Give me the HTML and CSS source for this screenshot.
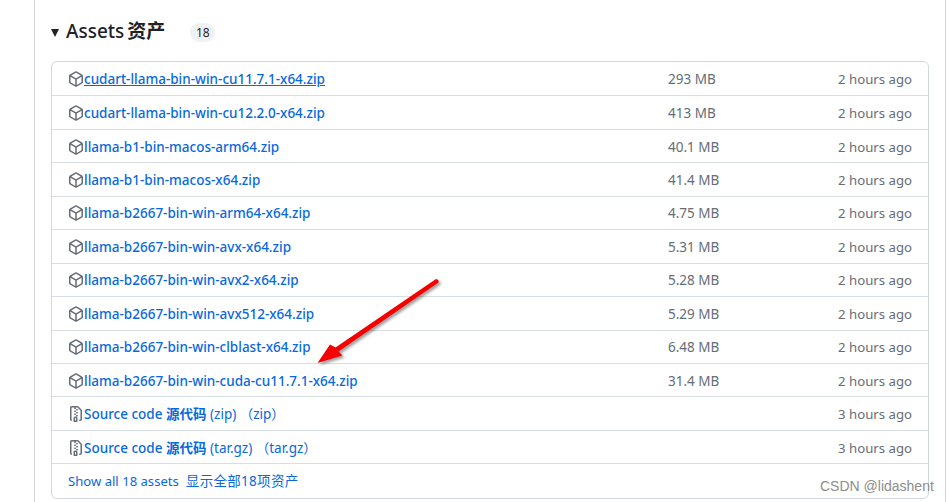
FILE: index.html

```html
<!DOCTYPE html>
<html lang="zh">
<head>
<meta charset="UTF-8">
<title>Assets</title>
<link rel="stylesheet" href="styles.css">
</head>
<body>

<svg class="defs" width="0" height="0">
    <symbol id="pkg" viewBox="0 0 16 16"><path d="m8.878.392 5.25 3.045c.54.314.872.89.872 1.514v6.098a1.75 1.75 0 0 1-.872 1.514l-5.25 3.045a1.75 1.75 0 0 1-1.756 0l-5.25-3.045A1.75 1.75 0 0 1 1 11.049V4.951c0-.624.332-1.201.872-1.514L7.122.392a1.75 1.75 0 0 1 1.756 0ZM7.875 1.69l-4.63 2.685L8 7.133l4.755-2.758-4.63-2.685a.248.248 0 0 0-.25 0ZM2.5 5.677v5.372c0 .09.047.171.125.216l4.625 2.683V8.432Zm6.25 8.271 4.625-2.683a.25.25 0 0 0 .125-.216V5.677L8.75 8.432Z"/></symbol>
    <symbol id="zip" viewBox="0 0 16 16"><path d="M3.5 1.75v11.5c0 .09.048.173.126.217a.75.75 0 0 1-.752 1.298A1.748 1.748 0 0 1 2 13.25V1.75C2 .784 2.784 0 3.75 0h5.586c.464 0 .909.185 1.237.513l2.914 2.914c.329.328.513.773.513 1.237v8.586A1.75 1.75 0 0 1 12.25 15h-.5a.75.75 0 0 1 0-1.5h.5a.25.25 0 0 0 .25-.25V4.664a.25.25 0 0 0-.073-.177L9.513 1.573a.25.25 0 0 0-.177-.073H7.25a.75.75 0 0 1 0 1.5h-.5a.75.75 0 0 1 0-1.5h-3a.25.25 0 0 0-.25.25Zm3.75 8.75h.5c.966 0 1.75.784 1.75 1.75v3a.75.75 0 0 1-.75.75h-2.5a.75.75 0 0 1-.75-.75v-3c0-.966.784-1.75 1.75-1.75ZM6 5.25a.75.75 0 0 1 .75-.75h.5a.75.75 0 0 1 0 1.5h-.5A.75.75 0 0 1 6 5.25Zm.75 2.25h.5a.75.75 0 0 1 0 1.5h-.5a.75.75 0 0 1 0-1.5ZM8 6.75A.75.75 0 0 1 8.75 6h.5a.75.75 0 0 1 0 1.5h-.5A.75.75 0 0 1 8 6.75ZM8.75 3h.5a.75.75 0 0 1 0 1.5h-.5a.75.75 0 0 1 0-1.5ZM8 9.75A.75.75 0 0 1 8.75 9h.5a.75.75 0 0 1 0 1.5h-.5A.75.75 0 0 1 8 9.75Zm-1 2.5v2.25h1v-2.25a.25.25 0 0 0-.25-.25h-.5a.25.25 0 0 0-.25.25Z"/></symbol>
</svg>

<div class="frame">
    <div class="head">
        <span class="caret"></span>
        <h2>Assets <b>资产</b></h2>
        <span class="count">18</span>
    </div>

    <ul class="assets">
        <li class="row"><span class="name"><svg class="ico"><use href="#pkg"/></svg><a class="hovered">cudart-llama-bin-win-cu11.7.1-x64.zip</a></span><span class="size">293 MB</span><span class="time">2 hours ago</span></li>
        <li class="row"><span class="name"><svg class="ico"><use href="#pkg"/></svg><a>cudart-llama-bin-win-cu12.2.0-x64.zip</a></span><span class="size">413 MB</span><span class="time">2 hours ago</span></li>
        <li class="row"><span class="name"><svg class="ico"><use href="#pkg"/></svg><a>llama-b1-bin-macos-arm64.zip</a></span><span class="size">40.1 MB</span><span class="time">2 hours ago</span></li>
        <li class="row"><span class="name"><svg class="ico"><use href="#pkg"/></svg><a>llama-b1-bin-macos-x64.zip</a></span><span class="size">41.4 MB</span><span class="time">2 hours ago</span></li>
        <li class="row"><span class="name"><svg class="ico"><use href="#pkg"/></svg><a>llama-b2667-bin-win-arm64-x64.zip</a></span><span class="size">4.75 MB</span><span class="time">2 hours ago</span></li>
        <li class="row"><span class="name"><svg class="ico"><use href="#pkg"/></svg><a>llama-b2667-bin-win-avx-x64.zip</a></span><span class="size">5.31 MB</span><span class="time">2 hours ago</span></li>
        <li class="row"><span class="name"><svg class="ico"><use href="#pkg"/></svg><a>llama-b2667-bin-win-avx2-x64.zip</a></span><span class="size">5.28 MB</span><span class="time">2 hours ago</span></li>
        <li class="row"><span class="name"><svg class="ico"><use href="#pkg"/></svg><a>llama-b2667-bin-win-avx512-x64.zip</a></span><span class="size">5.29 MB</span><span class="time">2 hours ago</span></li>
        <li class="row"><span class="name"><svg class="ico"><use href="#pkg"/></svg><a>llama-b2667-bin-win-clblast-x64.zip</a></span><span class="size">6.48 MB</span><span class="time">2 hours ago</span></li>
        <li class="row"><span class="name"><svg class="ico"><use href="#pkg"/></svg><a>llama-b2667-bin-win-cuda-cu11.7.1-x64.zip</a></span><span class="size">31.4 MB</span><span class="time">2 hours ago</span></li>
        <li class="row"><span class="name"><svg class="ico"><use href="#zip"/></svg><a>Source code <b>源代码</b> <em>(zip) （zip）</em></a></span><span class="size"></span><span class="time">3 hours ago</span></li>
        <li class="row"><span class="name"><svg class="ico"><use href="#zip"/></svg><a>Source code <b>源代码</b> <em>(tar.gz) （tar.gz）</em></a></span><span class="size"></span><span class="time">3 hours ago</span></li>
        <li class="row show-all"><a><span class="latin">Show all 18 assets</span>&nbsp; <span class="cjk">显示全部18项资产</span></a></li>
    </ul>
</div>

<!-- red annotation arrow on top of the list -->
<svg class="arrow" width="951" height="502" viewBox="0 0 951 502">
    <defs>
        <filter id="soft" x="-20%" y="-20%" width="140%" height="140%"><feDropShadow dx="2" dy="2" stdDeviation="1.5" flood-color="#000" flood-opacity="0.4"/></filter>
    </defs>
    <path filter="url(#soft)" fill="#f40000" d="M436 279 Q439.500 280 438.500 282.500 L338.500 351.500 L342.500 355.500 L317.500 363 L330 344.500 L335.500 347.500 Z"/>
</svg>

<div class="mark">CSDN @lidashent</div>

</body>
</html>
```

FILE: styles.css

```css
* { box-sizing: border-box; }
html, body { height: 100%; }
body { margin: 0; background: #fff; color: #1f2328; font-family: "Noto Sans", "Noto Sans CJK SC", sans-serif; overflow: hidden; }

.defs { display: block; height: 0; }

.frame { width: 912px; height: 502px; margin-left: 34px; border-left: 1px solid #d0d7de; border-right: 1px solid #d0d7de; padding: 0 16px; }

.head { display: flex; align-items: center; height: 61px; }
.caret { width: 0; height: 0; border-left: 4.5px solid transparent; border-right: 4.5px solid transparent; border-top: 8px solid #1f2328; margin-right: 6px; margin-top: 4px; }
.head h2 { margin: 0 0 0 1px; font-size: 19px; font-weight: 500; line-height: 24px; word-spacing: -2px; }
.head h2 b { font-weight: 700; }
.count { margin-left: 25px; margin-top: 3px; width: 25px; height: 19px; border-radius: 10px; background: #eff1f3; font-size: 12px; line-height: 19px; text-align: center; }

.assets { list-style: none; margin: 0; padding: 0; width: 878px; height: 437.500px; border: 1px solid #d0d7de; border-radius: 6px; display: grid; grid-template-rows: repeat(12, 33.450px) 1fr; }

.row { display: flex; align-items: center; padding: 1px 16px 0; border-top: 1px solid #d8dee4; font-size: 13.500px; line-height: 18px; }
.row:first-child { border-top: none; }

.name { flex: 1; display: flex; align-items: center; min-width: 0; }
.name a { color: #0969da; font-weight: 500; }
.name a.hovered { text-decoration: underline; }
.name em { font-style: normal; font-weight: 400; }
.name b { font-weight: 700; }

.ico { width: 16px; height: 16px; fill: #656d76; flex: none; }

.size { width: 120px; color: #656d76; }
.time { width: 124px; text-align: right; color: #656d76; font-size: 13.200px; }

.show-all a { color: #0969da; }
.show-all .latin { font-size: 13.100px; }
.show-all .cjk { letter-spacing: 0.3px; }

.arrow { position: absolute; left: 0; top: 0; pointer-events: none; }
.mark { position: absolute; left: 820px; top: 478px; font-size: 14px; color: #8d8d8d; font-family: "Liberation Sans", sans-serif; }
```
